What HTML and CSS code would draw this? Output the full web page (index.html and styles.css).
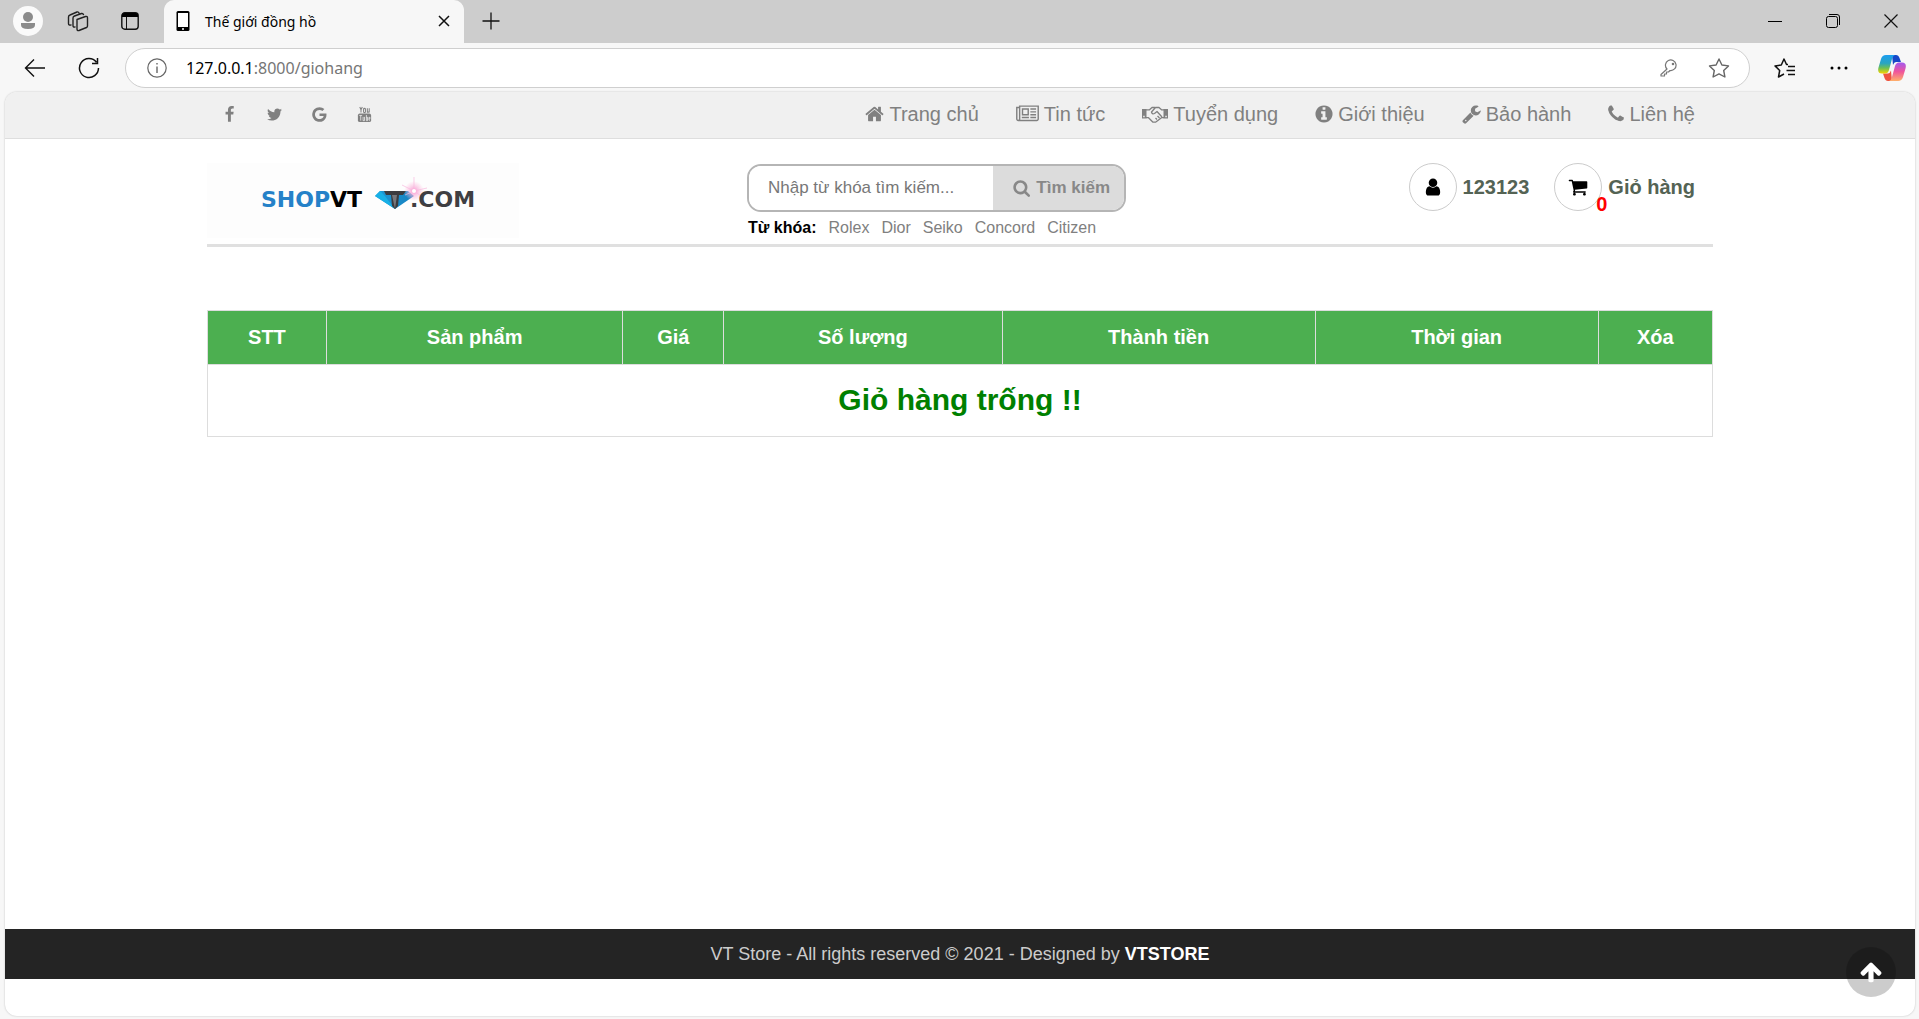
FILE: index.html
```html
<!DOCTYPE html>
<html lang="vi">
<head>
<meta charset="utf-8">
<meta name="viewport" content="width=device-width, initial-scale=1">
<title>Thế giới đồng hồ</title>
<link rel="stylesheet" href="styles.css">
</head>
<body>
<svg class="defs" width="0" height="0" aria-hidden="true">
  <symbol id="home" viewBox="64 0 1664 1792"><path d="M1472 992v480q0 26-19 45t-45 19h-384v-384h-256v384h-384q-26 0-45-19t-19-45v-480q0-1 .5-3t.5-3l575-474 575 474q1 2 1 6zm223-69l-62 74q-8 9-21 11h-3q-13 0-21-7l-692-577-692 577q-12 8-24 7-13-2-21-11l-62-74q-8-10-7-23.5t11-21.5l719-599q32-26 76-26t76 26l244 204v-195q0-14 9-23t23-9h192q14 0 23 9t9 23v408l219 182q10 8 11 21.5t-7 23.5z"/></symbol>
  <symbol id="news" viewBox="0 0 2048 1792"><path d="M1024 512h-384v384h384v-384zm128 640v128h-640v-128h640zm0-768v640h-640v-640h640zm640 768v128h-512v-128h512zm0-256v128h-512v-128h512zm0-256v128h-512v-128h512zm0-256v128h-512v-128h512zM256 1344v-960h-128v960q0 26 19 45t45 19 45-19 19-45zm1664 0v-1088h-1536v1088q0 33-11 64h1483q26 0 45-19t19-45zm128-1216v1216q0 80-56 136t-136 56h-1664q-80 0-136-56t-56-136v-1088h256v-128h1792z"/></symbol>
  <symbol id="shake" viewBox="0 0 26 20"><path d="M0 5h4.500v9.500H0zM21.500 5H26v9.500h-4.500z"/><path d="M4 5.800h3.500L10 3.500h3M4 13.700h2.500l4.500 4.500h2.500l6-4.500H22M22 5.800h-2.500L17 3.500h-3.500L9.500 8q.5 2.500 3 1.500l2.500-2 5 5.500M15 15.500l-1.500-1.500M17.500 14l-2-2" fill="none" stroke="currentColor" stroke-width="1.300" stroke-linejoin="round"/><path d="M1.200 11.800h1.500v1.500H1.200zM23.300 11.800h1.500v1.500h-1.500z" fill="#f0f0f0"/></symbol>
  <symbol id="info" viewBox="128 0 1536 1792"><path d="M1152 1376v-160q0-14-9-23t-23-9h-96v-512q0-14-9-23t-23-9h-320q-14 0-23 9t-9 23v160q0 14 9 23t23 9h96v320h-96q-14 0-23 9t-9 23v160q0 14 9 23t23 9h448q14 0 23-9t9-23zm-128-896v-160q0-14-9-23t-23-9h-192q-14 0-23 9t-9 23v160q0 14 9 23t23 9h192q14 0 23-9t9-23zm640 416q0 209-103 385.500t-279.500 279.500-385.500 103-385.500-103-279.500-279.500-103-385.500 103-385.500 279.500-279.500 385.500-103 385.500 103 279.500 279.500 103 385.500z"/></symbol>
  <symbol id="wrench" viewBox="64 0 1664 1792"><path d="M448 1472q0-26-19-45t-45-19-45 19-19 45 19 45 45 19 45-19 19-45zm644-420l-682 682q-37 37-90 37-52 0-91-37l-106-108q-38-36-38-90 0-53 38-91l681-681q39 98 114.500 173.500t173.500 114.500zm634-435q0 39-23 106-47 134-164.500 217.500t-258.500 83.500q-185 0-316.500-131.500t-131.500-316.500 131.500-316.500 316.500-131.500q58 0 121.500 16.500t107.500 46.500q16 11 16 28t-16 28l-293 169v224l193 107q5-3 79-48.500t135.500-81 70.500-35.500q15 0 23.500 10t8.500 25z"/></symbol>
  <symbol id="phone" viewBox="192 0 1408 1792"><path d="M1600 1240q0 27-10 70.500t-21 68.500q-21 50-122 106-94 51-186 51-27 0-53-3.500t-57.500-12.500-47-14.500-55.500-20.500-49-18q-98-35-175-83-127-79-264-216t-216-264q-48-77-83-175-3-9-18-49t-20.500-55.500-14.500-47-12.500-57.500-3.500-53q0-92 51-186 56-101 106-122 25-11 68.500-21t70.500-10q14 0 21 3 18 6 53 76 11 19 30 54t35 63.500 31 53.500q3 4 17.500 25t21.500 35.500 7 28.500q0 20-28.500 50t-62 55-62 53-28.500 46q0 9 5 22.500t8.500 20.500 14 24 11.500 19q76 137 174 235t235 174q2 1 19 11.500t24 14 20.500 8.500 22.500 5q18 0 46-28.500t53-62 55-62 50-28.500q14 0 28.500 7t35.500 21.500 25 17.500q25 15 53.500 31t63.500 35 54 30q70 35 76 53 3 7 3 21z"/></symbol>
  <symbol id="search" viewBox="64 0 1728 1792"><path d="M1216 832q0-185-131.500-316.500t-316.500-131.500-316.500 131.500-131.500 316.500 131.500 316.500 316.500 131.500 316.500-131.500 131.500-316.500zm512 832q0 52-38 90t-90 38q-54 0-90-38l-343-342q-179 124-399 124-143 0-273.500-55.500t-225-150-150-225-55.500-273.500 55.500-273.500 150-225 225-150 273.500-55.500 273.500 55.500 225 150 150 225 55.500 273.500q0 220-124 399l343 343q37 37 37 90z"/></symbol>
  <symbol id="user" viewBox="0 0 1792 1792"><path d="M1536 1399q0 109-62.500 187t-150.500 78h-854q-88 0-150.500-78t-62.500-187q0-85 8.500-160.500t31.500-152 58.500-131 94-89 134.500-34.500q131 128 313 128t313-128q76 0 134.500 34.500t94 89 58.500 131 31.500 152 8.500 160.500zm-256-887q0 159-112.500 271.500t-271.500 112.500-271.500-112.500-112.500-271.500 112.500-271.500 271.500-112.500 271.500 112.500 112.500 271.500z"/></symbol>
  <symbol id="cart" viewBox="0 0 1792 1792"><path d="M704 1536q0 52-38 90t-90 38-90-38-38-90 38-90 90-38 90 38 38 90zm896 0q0 52-38 90t-90 38-90-38-38-90 38-90 90-38 90 38 38 90zm128-1088v512q0 24-16.500 42.500t-40.500 21.500l-1044 122q13 60 13 70 0 16-24 64h920q26 0 45 19t19 45-19 45-45 19h-1024q-26 0-45-19t-19-45q0-11 8-31.500t16-36 21.500-40 15.500-29.500l-177-823h-204q-26 0-45-19t-19-45 19-45 45-19h256q16 0 28.500 6.500t19.500 15.500 13 24.500 8 26 5.500 29.500 4.500 26h1201q26 0 45 19t19 45z"/></symbol>
  <symbol id="facebook" viewBox="0 0 1792 1792"><path d="M1343 12v264h-157q-86 0-116 36t-30 108v189h293l-39 296h-254v759h-306v-759h-255v-296h255v-218q0-186 104-288.500t277-102.500q147 0 228 12z"/></symbol>
  <symbol id="twitter" viewBox="0 0 1792 1792"><path d="M1684 408q-67 98-162 167 1 14 1 42 0 130-38 259.500t-115.500 248.500-184.500 210.500-258 146-323 54.500q-271 0-496-145 35 4 78 4 225 0 401-138-105-2-188-64.500t-114-159.500q33 5 61 5 43 0 85-11-112-23-185.500-111.500t-73.500-205.500v-4q68 38 146 41-66-44-105-115t-39-154q0-88 44-163 121 149 294.500 238.500t371.500 99.500q-8-38-8-74 0-134 94.500-228.500t228.500-94.500q140 0 236 102 109-21 205-78-37 115-142 178 93-10 186-50z"/></symbol>
  <symbol id="google" viewBox="0 0 1792 1792"><path d="M896 786h725q12 67 12 128 0 217-91 387.500t-259.500 266.500-386.500 96q-157 0-299-60.500t-245-163.500-163.500-245-60.500-299 60.500-299 163.500-245 245-163.500 299-60.500q300 0 515 201l-209 201q-123-119-306-119-129 0-238.500 65t-173.500 176.500-64 243.500 64 243.500 173.500 176.500 238.500 65q87 0 160-24t120-60 82-82 51.500-87 22.500-78h-436v-264z"/></symbol>
  <symbol id="youtube" viewBox="0 0 18 18"><path d="M4 1l1.300 3v3M6.700 1L5.300 4M8 3.500v2.500q0 1 1 1t1-1v-2.500q0-1-1-1t-1 1zM12 2.500v4h1.500M14 2.500v4.500" fill="none" stroke="currentColor" stroke-width="1.100"/><rect x="2" y="8" width="14" height="9" rx="2"/><path d="M3.500 10h3M5 10v5.500M7.500 11.500v4h1.500v-4M11 9.500v6h1.200v-3.500H11M14.800 15H13.700v-3h1.100v1.500h-1" fill="none" stroke="#f0f0f0" stroke-width=".8"/></symbol>
  <symbol id="up" viewBox="0 0 1792 1792"><path d="M1675 971q0 51-37 90l-75 75q-38 38-91 38-54 0-90-38l-294-293v704q0 52-37.500 84.500t-90.500 32.500h-128q-53 0-90.500-32.500t-37.500-84.500v-704l-294 293q-36 38-90 38t-90-38l-75-75q-38-38-38-90 0-53 38-91l651-651q35-37 90-37 54 0 91 37l651 651q37 39 37 91z"/></symbol>
</svg>

<div class="tabbar">
  <div class="tabtools">
    <button class="bbtn profile" aria-label="Hồ sơ"><svg width="30" height="30" viewBox="0 0 30 30"><circle cx="15" cy="15" r="15" fill="#fafafa"/><circle cx="15" cy="11" r="5" fill="#8b8b8b"/><path d="M8 17h14v2q0 4-7 4t-7-4z" fill="#8b8b8b"/></svg></button>
    <button class="bbtn" aria-label="Không gian làm việc"><svg width="22" height="22" viewBox="0 0 22 22" fill="none" stroke="#222" stroke-width="1.400" stroke-linejoin="round" stroke-linecap="round"><path d="M10 9.500l8.500-3q2-.5 2 1.500v8q0 1-1 1.500l-7.500 3q-2 .5-2-1.500zM8 17q-2 .5-2-1.500V8q0-1.500 1.500-2l7-2.500q1.500-.3 2 1M4 15q-2.500.5-2.500-1.500V7q0-1.500 1.500-2l7-3q1.500-.4 2 1"/></svg></button>
    <button class="bbtn" aria-label="Tab dọc"><svg width="18" height="18" viewBox="0 0 18 18"><rect x=".8" y=".8" width="16.400" height="16.400" rx="3" fill="none" stroke="#111" stroke-width="1.400"/><path d="M1 5V3q0-2 2-2h12q2 0 2 2v2z" fill="#000"/><path d="M5.500 5v12" stroke="#111"/></svg></button>
  </div>
  <div class="tab">
    <svg width="14" height="20" viewBox="0 0 14 20"><rect x=".5" y="0" width="13" height="20" rx="1.500"/><path d="M2 2h10v14H2z" fill="#fff"/><circle cx="7" cy="18" r="1" fill="#fff"/></svg>
    <span class="tabtitle">Thế giới đồng hồ</span>
    <button class="bbtn" aria-label="Đóng tab"><svg width="12" height="12" viewBox="0 0 12 12"><path d="M1 1l10 10M11 1L1 11" stroke="#111" stroke-width="1.500"/></svg></button>
  </div>
  <button class="bbtn newtab" aria-label="Tab mới"><svg width="18" height="18" viewBox="0 0 18 18"><path d="M9 .5v17M.5 9h17" stroke="#111" stroke-width="1.300"/></svg></button>
  <div class="winctl">
    <button class="bbtn" aria-label="Thu nhỏ"><svg width="14" height="14" viewBox="0 0 14 14"><path d="M0 7.500h14" stroke="#000"/></svg></button>
    <button class="bbtn" aria-label="Khôi phục"><svg width="14" height="14" viewBox="0 0 14 14" fill="none" stroke="#000"><rect x=".5" y="2.500" width="11" height="11" rx="2"/><path d="M3 .5h8q2.500 0 2.500 2.500v8"/></svg></button>
    <button class="bbtn" aria-label="Đóng"><svg width="14" height="14" viewBox="0 0 14 14"><path d="M.5.5l13 13M13.500.5l-13 13" stroke="#111" stroke-width="1.200"/></svg></button>
  </div>
</div>

<div class="toolbar">
  <button class="bbtn" aria-label="Quay lại"><svg width="22" height="18" viewBox="0 0 22 18" fill="none" stroke="#111" stroke-width="1.400"><path d="M21 9H1.500M10 .5L1.500 9l8.500 8.500"/></svg></button>
  <button class="bbtn" aria-label="Tải lại"><svg width="22" height="22" viewBox="0 0 22 22" fill="none" stroke="#111" stroke-width="1.500"><path d="M20.500 11A9.500 9.500 0 1 1 18.500 5.200M19.500 1v5.500H14"/></svg></button>
  <div class="address">
    <svg width="20" height="20" viewBox="0 0 20 20" fill="none" stroke="#666" stroke-width="1.200"><circle cx="10" cy="10" r="9.200"/><path d="M10 8.500V15M10 5v1.500" stroke-width="1.400"/></svg>
    <div class="url"><b>127.0.0.1</b>:8000/giohang</div>
    <button class="bbtn" aria-label="Mật khẩu"><svg width="18" height="18" viewBox="0 0 18 18" fill="none" stroke="#777" stroke-width="1.200"><path d="M7 10L1 15.500V17h3.500v-2h2v-2h2l1.500-1.500A5.300 5.300 0 1 0 7 10z" stroke-linejoin="round"/><circle cx="13" cy="5" r=".7"/></svg></button>
    <button class="bbtn" aria-label="Yêu thích"><svg width="22" height="20" viewBox="0 0 22 20" fill="none" stroke="#666" stroke-width="1.400" stroke-linejoin="round"><path d="M11 1l2.900 6 6.600.9-4.800 4.600 1.200 6.500-5.900-3.100L5.100 19l1.200-6.500L1.500 7.900 8.100 7z"/></svg></button>
  </div>
  <div class="extras">
    <button class="bbtn" aria-label="Danh sách yêu thích"><svg width="22" height="20" viewBox="0 0 22 20" fill="none" stroke="#111" stroke-width="1.500" stroke-linejoin="round"><path d="M14 6.500L12.500 6.500 10 1 7.300 7 1 7.900l4.700 4.600L4.500 19l5.500-3M14 8.500h7M12.500 12.500H21M14 16.500h7"/></svg></button>
    <button class="bbtn" aria-label="Thêm"><svg width="18" height="4" viewBox="0 0 18 4"><circle cx="2" cy="2" r="1.500"/><circle cx="9" cy="2" r="1.500"/><circle cx="16" cy="2" r="1.500"/></svg></button>
    <button class="bbtn" aria-label="Copilot"><svg width="28" height="26" viewBox="0 0 28 26"><defs><linearGradient id="ga" x1="0" y1="0" x2="0" y2="1"><stop offset="0" stop-color="#1b9df0"/><stop offset=".45" stop-color="#2aa5c0"/><stop offset=".7" stop-color="#6cbf55"/><stop offset="1" stop-color="#f5d400"/></linearGradient><linearGradient id="gb" x1="0" y1="0" x2="0" y2="1"><stop offset="0" stop-color="#a259f0"/><stop offset=".5" stop-color="#f0559b"/><stop offset="1" stop-color="#ffb06a"/></linearGradient></defs><path d="M14 0h4q2.500 0 3.500 3l1.500 4h-5q-2 0-3 3z" fill="#1748c8"/><path d="M14 26h-4q-2.500 0-3.500-3L5 18.500h5q2 0 3-3z" fill="#ee5340"/><path d="M8 0h9q-2 .5-3 4l-3 11q-1 3.500-4 3.500H4q-5 0-3.500-6L3 4q1.200-4 5-4z" fill="url(#ga)"/><path d="M20 26h-9q2-.5 3-4l3-11q1-3.500 4-3.500h3q5 0 3.500 6L25 22q-1.200 4-5 4z" fill="url(#gb)"/></svg></button>
  </div>
</div>

<div class="page">
  <div class="topnav">
    <div class="container topnav-in">
      <div class="social">
        <a href="#" aria-label="Facebook"><svg width="17" height="17"><use href="#facebook"/></svg></a>
        <a href="#" aria-label="Twitter"><svg width="17" height="17"><use href="#twitter"/></svg></a>
        <a href="#" aria-label="Google"><svg width="17" height="17"><use href="#google"/></svg></a>
        <a href="#" aria-label="YouTube"><svg width="17" height="17"><use href="#youtube"/></svg></a>
      </div>
      <nav class="menu">
        <a href="#"><svg width="19" height="20"><use href="#home"/></svg>Trang chủ</a>
        <a href="#"><svg width="23" height="20"><use href="#news"/></svg>Tin tức</a>
        <a href="#"><svg width="26" height="20"><use href="#shake"/></svg>Tuyển dụng</a>
        <a href="#"><svg width="18" height="20"><use href="#info"/></svg>Giới thiệu</a>
        <a href="#"><svg width="19" height="20"><use href="#wrench"/></svg>Bảo hành</a>
        <a href="#"><svg width="16" height="20"><use href="#phone"/></svg>Liên hệ</a>
      </nav>
    </div>
  </div>

  <header class="container header">
    <a class="logo" href="#" aria-label="SHOPVT.COM">
      <svg width="312" height="75" viewBox="0 0 312 75">
        <defs>
          <radialGradient id="glow"><stop offset="0" stop-color="#ff8fcf"/><stop offset=".5" stop-color="#f9b5dc" stop-opacity=".6"/><stop offset="1" stop-color="#fbd" stop-opacity="0"/></radialGradient>
          <linearGradient id="gem"><stop offset="0" stop-color="#1f9ad6"/><stop offset="1" stop-color="#1681c0"/></linearGradient>
        </defs>
        <text class="logotext" x="54" y="44"><tspan fill="#2581c8">SHOP</tspan><tspan fill="#000">VT</tspan></text>
        <path d="M173 28h28l6 5-19 13-20-13z" fill="url(#gem)"/>
        <path d="M168 33l5-5 4 4zM168 33l20 13-11-14z" fill="#18b0e6"/>
        <path d="M177 28h22l-3 4h-4l-1 11-3 3-3-3-1-11h-5z" fill="#3b3b3f"/>
        <path d="M185 32l3 14 2-14z" fill="#77777c"/>
        <circle cx="207" cy="28" r="10" fill="url(#glow)"/>
        <path d="M207 14v14M195 22l12 6 13-3M198 32l9-4 10 7" stroke="#f8b9de" stroke-width=".7" fill="none"/>
        <circle cx="207" cy="28" r="2" fill="#fff"/>
        <text class="logotext" x="203" y="44" fill="#3f3f42">.COM</text>
      </svg>
    </a>
    <div class="finder">
      <form class="search">
        <input type="text" aria-label="Từ khóa tìm kiếm" placeholder="Nhập từ khóa tìm kiếm...">
        <button type="button"><svg width="18" height="18"><use href="#search"/></svg>Tìm kiếm</button>
      </form>
      <div class="tags"><b>Từ khóa:</b><a href="#">Rolex</a><a href="#">Dior</a><a href="#">Seiko</a><a href="#">Concord</a><a href="#">Citizen</a></div>
    </div>
    <div class="account">
      <a href="#"><span class="ring"><svg width="20" height="20"><use href="#user"/></svg></span>123123</a>
      <a href="#"><span class="ring"><svg width="20" height="20"><use href="#cart"/></svg><span class="count">0</span></span>Giỏ hàng</a>
    </div>
  </header>

  <main class="container">
    <table class="cart">
      <colgroup><col class="c-no"><col class="c-item"><col class="c-price"><col class="c-qty"><col class="c-total"><col class="c-time"><col class="c-del"></colgroup>
      <thead><tr><th>STT</th><th>Sản phẩm</th><th>Giá</th><th>Số lượng</th><th>Thành tiền</th><th>Thời gian</th><th>Xóa</th></tr></thead>
      <tbody><tr><td colspan="7"><h1>Giỏ hàng trống !!</h1></td></tr></tbody>
    </table>
  </main>

  <footer class="footer">VT Store - All rights reserved © 2021 - Designed by <b>VTSTORE</b></footer>
  <button class="totop" aria-label="Lên đầu trang"><svg width="24" height="24"><use href="#up"/></svg></button>
</div>
</body>
</html>
```
FILE: styles.css
```css
* { box-sizing: border-box; }

body {
  margin: 0;
  min-height: 100vh;
  display: flex;
  flex-direction: column;
  background: #f7f7f7;
  font-family: "Liberation Sans", Arial, sans-serif;
  font-size: 20px;
  color: #000;
}

a { color: inherit; text-decoration: none; }
svg { display: block; flex: none; }
.defs { position: absolute; }
use { fill: currentColor; }

/* Browser frame */
.bbtn {
  display: flex;
  align-items: center;
  justify-content: center;
  padding: 0;
  border: 0;
  background: none;
}

.tabbar {
  display: flex;
  height: 43px;
  padding-bottom: 1px;
  background: linear-gradient(#cdcdcd, #cdcdcd);
  font-family: "Noto Sans", sans-serif;
}
.tabtools {
  display: flex;
  align-items: center;
  gap: 24px;
  width: 164px;
  padding-left: 13px;
}
.tabtools .bbtn:last-child { margin-left: 8px; }
.tab {
  display: flex;
  align-items: center;
  width: 300px;
  padding: 0 14px 0 12px;
  background: #f7f7f7;
  border-radius: 10px 10px 0 0;
  box-shadow: 0 1px #f7f7f7;
}
.tabtitle { flex: 1; margin-left: 15px; font-size: 14px; }
.newtab { margin-left: 18px; }
.winctl {
  display: flex;
  align-items: center;
  gap: 44px;
  margin-left: auto;
  padding-right: 21px;
}

.toolbar {
  display: flex;
  align-items: center;
  height: 49px;
  padding: 0 13px 0 24px;
  gap: 32px;
}
.address {
  flex: 1;
  display: flex;
  align-items: center;
  height: 40px;
  margin-left: -7px;
  padding: 0 19px 0 21px;
  border: 1px solid #cfcfcf;
  border-radius: 20px;
  background: #fff;
  font-family: "Noto Sans", sans-serif;
  font-size: 16px;
}
.url { flex: 1; margin-left: 19px; color: #767676; }
.url b { font-weight: 400; color: #000; }
.address .bbtn + .bbtn { margin-left: 30px; }
.extras { display: flex; align-items: center; gap: 34px; margin-left: -8px; }
.extras .bbtn:last-child { margin-left: -4px; }

/* Site */
.page {
  flex: 1;
  display: flex;
  flex-direction: column;
  margin: 0 4px 3px 5px;
  padding-bottom: 37px;
  border-radius: 12px;
  background: #fff;
  box-shadow: 0 0 2px #bbb;
}
.container {
  width: 100%;
  max-width: 1506px;
  margin: 0 auto;
}

.topnav {
  border-bottom: 1px solid #dedede;
  border-radius: 12px 12px 0 0;
  background: #f0f0f0;
  color: #808080;
}
.topnav-in {
  display: flex;
  align-items: center;
  justify-content: space-between;
  height: 46px;
  padding: 0 18px 2px 14px;
}
.social { display: flex; gap: 28px; }
.menu { display: flex; gap: 37px; }
.menu a { display: flex; align-items: center; gap: 5px; }

.header {
  display: grid;
  grid-template-columns: 540px 379px 1fr;
  align-items: start;
  padding: 24px 18px 6px 0;
  border-bottom: 3px solid #e0e0e0;
}
.logo { width: 312px; background: #fdfdfd; }
.logotext { font: 700 22px "DejaVu Sans", sans-serif; }

.search {
  display: flex;
  height: 48px;
  margin-top: 1px;
  border: 2px solid #b5b5b5;
  border-radius: 14px;
  overflow: hidden;
}
.search input {
  flex: 1;
  min-width: 0;
  padding: 0 19px;
  border: 0;
  font: 17px "Liberation Sans", Arial, sans-serif;
}
.search input::placeholder { color: #777; opacity: 1; }
.search button {
  display: flex;
  align-items: center;
  gap: 5px;
  padding: 0 14px 0 20px;
  border: 0;
  background: #dcdcdc;
  color: #888;
  font: 700 17px "Liberation Sans", Arial, sans-serif;
}
.tags { display: flex; gap: 12px; margin-top: 6px; padding-left: 1px; font-size: 16px; line-height: 20px; color: #808080; }
.tags b { color: #000; }

.account {
  display: flex;
  justify-content: flex-end;
  gap: 25px;
  font-weight: 700;
  color: #546354;
}
.account a { display: flex; align-items: center; gap: 6px; }
.ring {
  position: relative;
  display: flex;
  align-items: center;
  justify-content: center;
  width: 48px;
  height: 48px;
  border: 1px solid #ccc;
  border-radius: 50%;
  color: #000;
}
.count { position: absolute; right: -6px; bottom: -6px; color: #f00; }

.cart {
  width: 100%;
  margin-top: 63px;
  table-layout: fixed;
  border-collapse: collapse;
}
.cart th, .cart td { border: 1px solid #ddd; text-align: center; }
.cart th { height: 54px; padding: 0; background: #4caf50; color: #fff; }
.cart td { height: 72px; padding: 0 0 2px; }
.cart h1 { margin: 0; font-size: 30px; color: green; }
.c-no { width: 7.9%; }
.c-item { width: 19.7%; }
.c-price { width: 6.7%; }
.c-qty { width: 18.5%; }
.c-total { width: 20.8%; }
.c-time { width: 18.8%; }
.c-del { width: 7.6%; }

.footer {
  margin-top: auto;
  background: #242424;
  color: #ccc;
  font-size: 18px;
  line-height: 50px;
  text-align: center;
}
.footer b { color: #fff; }

.totop {
  position: fixed;
  right: 23px;
  bottom: 22px;
  display: flex;
  align-items: center;
  justify-content: center;
  width: 50px;
  height: 50px;
  padding: 0;
  border: 0;
  border-radius: 50%;
  background: rgba(0, 0, 0, .2);
  color: #fff;
}
```
